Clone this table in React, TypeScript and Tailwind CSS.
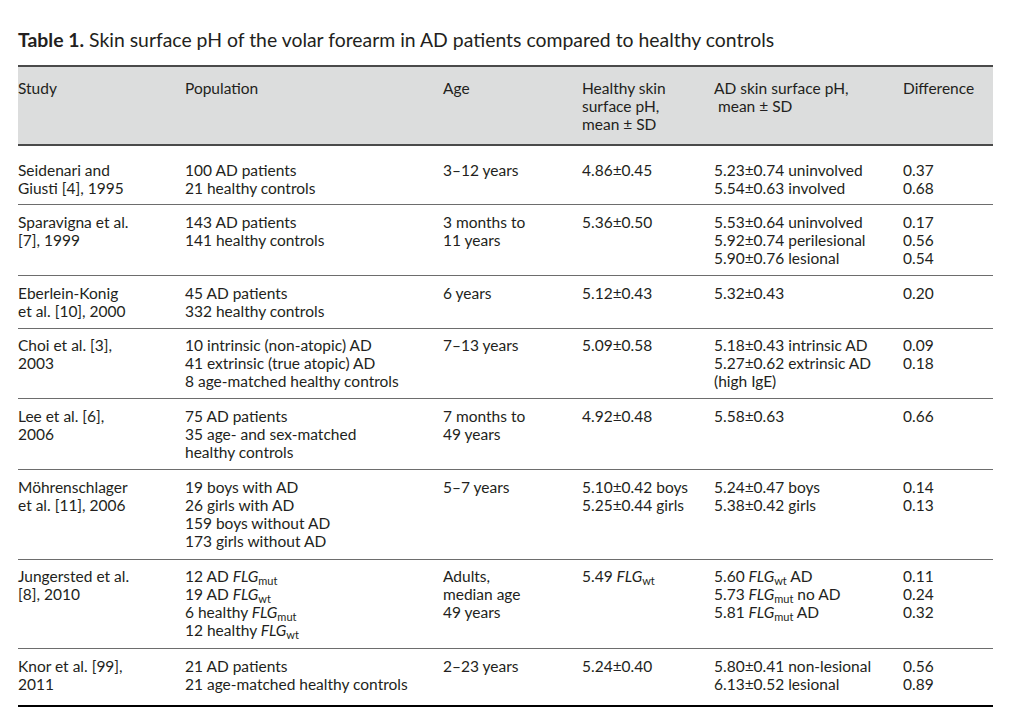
import React from "react";

const FLG = ({ s }: { s: string }) => (
  <>
    <i>FLG</i>
    <sub className="text-[11px] not-italic">{s}</sub>
  </>
);

type Row = { h: string; pt: string; cells: React.ReactNode[][]; last?: boolean };

const rows: Row[] = [
  {
    h: "h-[59px]",
    pt: "pt-[15px]",
    cells: [
      ["Seidenari and", "Giusti [4], 1995"],
      ["100 AD patients", "21 healthy controls"],
      ["3–12 years"],
      ["4.86±0.45"],
      ["5.23±0.74 uninvolved", "5.54±0.63 involved"],
      ["0.37", "0.68"],
    ],
  },
  {
    h: "h-[71px]",
    pt: "pt-[8px]",
    cells: [
      ["Sparavigna et al.", "[7], 1999"],
      ["143 AD patients", "141 healthy controls"],
      ["3 months to", "11 years"],
      ["5.36±0.50"],
      ["5.53±0.64 uninvolved", "5.92±0.74 perilesional", "5.90±0.76 lesional"],
      ["0.17", "0.56", "0.54"],
    ],
  },
  {
    h: "h-[53px]",
    pt: "pt-[8px]",
    cells: [
      ["Eberlein-Konig", "et al. [10], 2000"],
      ["45 AD patients", "332 healthy controls"],
      ["6 years"],
      ["5.12±0.43"],
      ["5.32±0.43"],
      ["0.20"],
    ],
  },
  {
    h: "h-[70px]",
    pt: "pt-[7px]",
    cells: [
      ["Choi et al. [3],", "2003"],
      ["10 intrinsic (non-atopic) AD", "41 extrinsic (true atopic) AD", "8 age-matched healthy controls"],
      ["7–13 years"],
      ["5.09±0.58"],
      ["5.18±0.43 intrinsic AD", "5.27±0.62 extrinsic AD", "(high IgE)"],
      ["0.09", "0.18"],
    ],
  },
  {
    h: "h-[71px]",
    pt: "pt-[8px]",
    cells: [
      ["Lee et al. [6],", "2006"],
      ["75 AD patients", "35 age- and sex-matched", "healthy controls"],
      ["7 months to", "49 years"],
      ["4.92±0.48"],
      ["5.58±0.63"],
      ["0.66"],
    ],
  },
  {
    h: "h-[90px]",
    pt: "pt-[8px]",
    cells: [
      ["Möhrenschlager", "et al. [11], 2006"],
      ["19 boys with AD", "26 girls with AD", "159 boys without AD", "173 girls without AD"],
      ["5–7 years"],
      ["5.10±0.42 boys", "5.25±0.44 girls"],
      ["5.24±0.47 boys", "5.38±0.42 girls"],
      ["0.14", "0.13"],
    ],
  },
  {
    h: "h-[89px]",
    pt: "pt-[7px]",
    cells: [
      ["Jungersted et al.", "[8], 2010"],
      [
        <>12 AD <FLG s="mut" /></>,
        <>19 AD <FLG s="wt" /></>,
        <>6 healthy <FLG s="mut" /></>,
        <>12 healthy <FLG s="wt" /></>,
      ],
      ["Adults,", "median age", "49 years"],
      [<>5.49 <FLG s="wt" /></>],
      [
        <>5.60 <FLG s="wt" /> AD</>,
        <>5.73 <FLG s="mut" /> no AD</>,
        <>5.81 <FLG s="mut" /> AD</>,
      ],
      ["0.11", "0.24", "0.32"],
    ],
  },
  {
    h: "h-[58px]",
    pt: "pt-[8px]",
    last: true,
    cells: [
      ["Knor et al. [99],", "2011"],
      ["21 AD patients", "21 age-matched healthy controls"],
      ["2–23 years"],
      ["5.24±0.40"],
      ["5.80±0.41 non-lesional", "6.13±0.52 lesional"],
      ["0.56", "0.89"],
    ],
  },
];

const grid = "grid grid-cols-[167px_258px_139px_132px_189px_90px]";

export default function App() {
  return (
    <div
      className="w-[1024px] h-[723px] bg-white text-[#231f20] overflow-hidden"
      style={{ fontFamily: "Lato, 'Open Sans', sans-serif" }}
    >
      <div className="pl-[18px] pt-[28px] h-[65px] text-[19.4px] leading-[24px]">
        <span className="font-bold">Table 1.</span> Skin surface pH of the volar forearm in AD patients compared to healthy controls
      </div>
      <div className="ml-[18px] w-[975px] text-[15.5px] leading-[18px]">
        <div className={`${grid} h-[81px] pt-[12px] bg-[#dcdddd] border-t-2 border-b-2 border-[#4a4a4a]`}>
          <div>Study</div>
          <div>Population</div>
          <div>Age</div>
          <div>
            Healthy skin
            <br />
            surface pH,
            <br />
            mean ± SD
          </div>
          <div>
            AD skin surface pH,
            <br />
            &nbsp;mean ± SD
          </div>
          <div>Difference</div>
        </div>
        {rows.map((r, i) => (
          <div
            key={i}
            className={`${grid} ${r.h} ${r.pt} ${
              r.last ? "border-b-2 border-black" : "border-b border-[#6d6d6d]"
            }`}
          >
            {r.cells.map((c, j) => (
              <div key={j} className="whitespace-nowrap">
                {c.map((line, k) => (
                  <div key={k}>{line}</div>
                ))}
              </div>
            ))}
          </div>
        ))}
      </div>
    </div>
  );
}
